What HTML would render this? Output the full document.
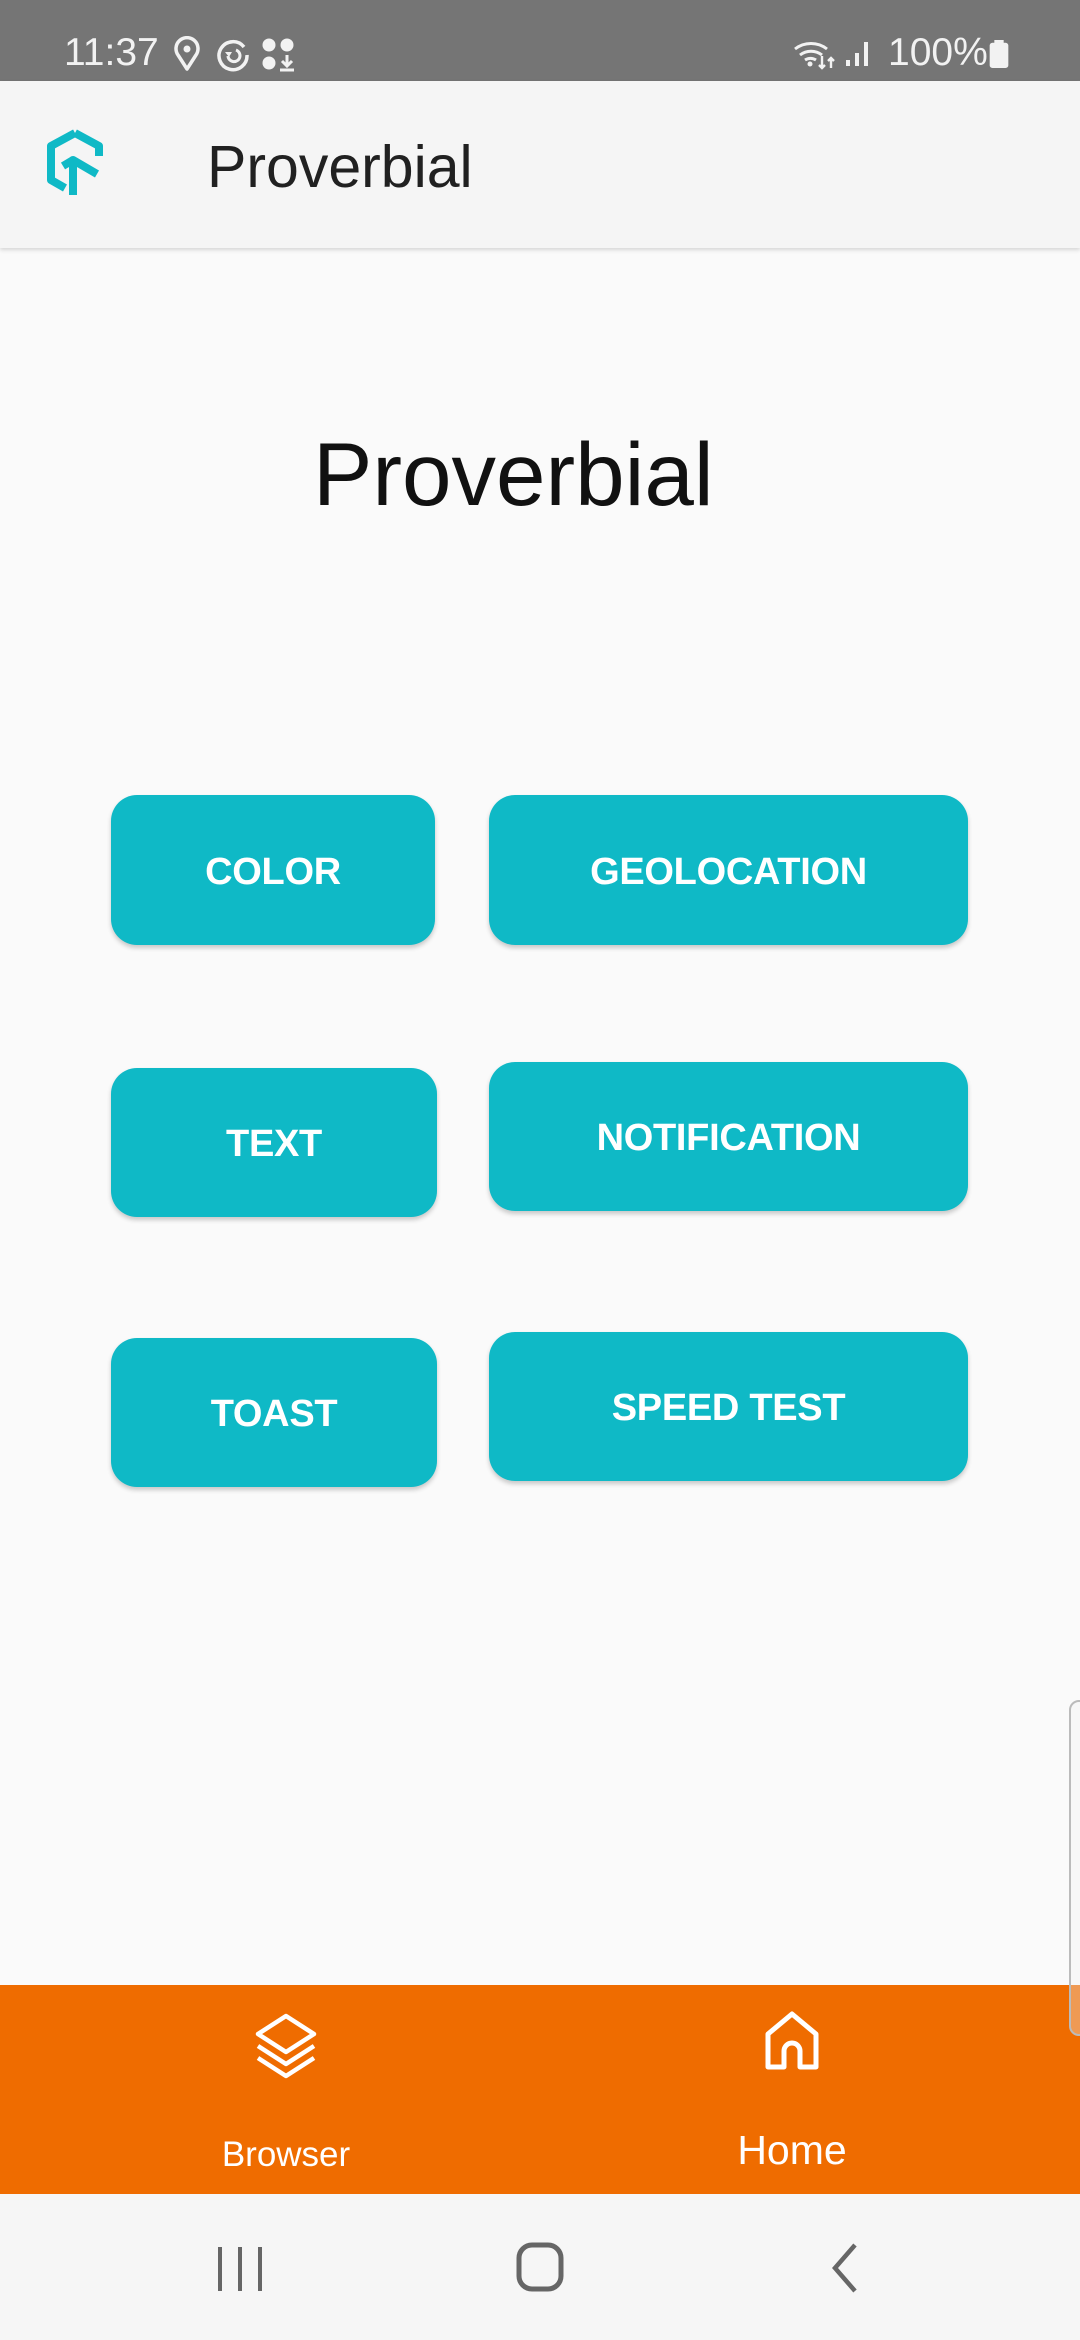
<!DOCTYPE html>
<html><head><meta charset="utf-8"><style>
*{margin:0;padding:0;box-sizing:border-box}
html,body{width:1080px;height:2340px;overflow:hidden;background:#fafafa;font-family:"Liberation Sans",sans-serif;position:relative}
.abs{position:absolute}
.status{left:0;top:0;width:1080px;height:81px;background:#757575;color:#f2f2f2}
.appbar{left:0;top:81px;width:1080px;height:167px;background:#f5f5f5;box-shadow:0 2px 4px rgba(0,0,0,.15)}
.btn{position:absolute;background:#0fb9c6;border-radius:26px;color:#fff;font-size:38px;font-weight:bold;display:flex;align-items:center;justify-content:center;box-shadow:0 3px 5px rgba(0,0,0,.2);letter-spacing:-0.3px;padding-top:4px}
.nav{left:0;top:1985px;width:1080px;height:209px;background:#ef6c00}
.sys{left:0;top:2194px;width:1080px;height:146px;background:#f6f6f6}
</style></head><body>
<div class="abs status">
  <div class="abs" style="left:64px;top:33px;font-size:39px;line-height:1">11:37</div>
  <svg class="abs" style="left:174px;top:36px" width="26" height="36" viewBox="0 0 26 36"><path d="M13 33 L4 19 A11 11 0 1 1 22 19 Z" fill="none" stroke="#f2f2f2" stroke-width="3.5" stroke-linejoin="round"/><circle cx="13" cy="13" r="3.5" fill="#f2f2f2"/></svg>
  <svg class="abs" style="left:216px;top:38px" width="34" height="34" viewBox="0 0 34 34"><path d="M28 9 A14 14 0 1 0 31 17" fill="none" stroke="#f2f2f2" stroke-width="3.5"/><path d="M20 12 A6 6 0 1 1 12 18" fill="none" stroke="#f2f2f2" stroke-width="3"/><path d="M9 14 L13 19 L16 14Z" fill="#f2f2f2"/></svg>
  <svg class="abs" style="left:262px;top:38px" width="34" height="34" viewBox="0 0 34 34"><circle cx="7" cy="7" r="6.5" fill="#f2f2f2"/><circle cx="25" cy="7" r="6.5" fill="#f2f2f2"/><circle cx="7" cy="25" r="6.5" fill="#f2f2f2"/><path d="M25 17v11M20 23l5 5 5-5M18 32h14" stroke="#f2f2f2" stroke-width="3" fill="none"/></svg>
  <svg class="abs" style="left:792px;top:38px" width="46" height="32" viewBox="0 0 46 32"><path d="M3 11 A26 26 0 0 1 35 11 M8 17 A18 18 0 0 1 30 17 M13 22 A10 10 0 0 1 24 22" fill="none" stroke="#f2f2f2" stroke-width="3"/><circle cx="18" cy="26" r="2.5" fill="#f2f2f2"/><path d="M30 18v12M27 27l3 3 3-3M39 30V20M36 23l3-3 3 3" stroke="#f2f2f2" stroke-width="2.4" fill="none"/></svg>
  <svg class="abs" style="left:845px;top:38px" width="30" height="30" viewBox="0 0 30 30"><rect x="1" y="22" width="4" height="6" fill="#f2f2f2"/><rect x="10" y="15" width="4" height="13" fill="#f2f2f2"/><rect x="19" y="4" width="4" height="24" fill="#f2f2f2"/></svg>
  <div class="abs" style="left:888px;top:33px;font-size:39px;line-height:1">100%</div>
  <svg class="abs" style="left:988px;top:40px" width="22" height="28" viewBox="0 0 22 30"><rect x="6" y="0" width="10" height="4" fill="#f2f2f2"/><rect x="1" y="3" width="20" height="27" rx="3" fill="#f2f2f2"/></svg>
</div>
<div class="abs appbar">
  <svg class="abs" style="left:44px;top:48px" width="66" height="70" viewBox="0 0 64 70"><path d="M30 4 L6 17 V51 L20 59" fill="none" stroke="#0fb9c6" stroke-width="8" stroke-linejoin="round"/><path d="M30 4 L54 17 V27" fill="none" stroke="#0fb9c6" stroke-width="8" stroke-linejoin="round"/><path d="M28 66 V31 L52 45" fill="none" stroke="#0fb9c6" stroke-width="8" stroke-linejoin="round"/><path d="M18 37 L28 31" stroke="#0fb9c6" stroke-width="8"/></svg>
  <div class="abs" style="left:207px;top:57px;font-size:59px;color:#212121;line-height:1">Proverbial</div>
</div>
<div class="abs" style="left:313px;top:430px;font-size:89px;color:#111;line-height:1">Proverbial</div>
<div class="btn" style="left:111px;top:795px;width:324px;height:150px">COLOR</div>
<div class="btn" style="left:489px;top:795px;width:479px;height:150px">GEOLOCATION</div>
<div class="btn" style="left:111px;top:1068px;width:326px;height:149px">TEXT</div>
<div class="btn" style="left:489px;top:1062px;width:479px;height:149px">NOTIFICATION</div>
<div class="btn" style="left:111px;top:1338px;width:326px;height:149px">TOAST</div>
<div class="btn" style="left:489px;top:1332px;width:479px;height:149px">SPEED TEST</div>
<div class="abs nav">
  <svg class="abs" style="left:254px;top:27px" width="64" height="70" viewBox="0 0 64 70"><path d="M32 4 L60 22 L32 40 L4 22 Z" fill="none" stroke="#fff" stroke-width="4.5" stroke-linejoin="round"/><path d="M4 34 L32 52 L60 34 M4 46 L32 64 L60 46" fill="none" stroke="#fff" stroke-width="4.5" stroke-linejoin="round"/></svg>
  <svg class="abs" style="left:763px;top:25px" width="58" height="62" viewBox="0 0 58 62"><path d="M5 57 V24 L29 4 L53 24 V57 H37 V41 A8 8 0 0 0 21 41 V57 Z" fill="none" stroke="#fff" stroke-width="5" stroke-linejoin="round"/></svg>
  <div class="abs" style="left:186px;top:152px;width:200px;text-align:center;font-size:35px;color:#fff;line-height:1">Browser</div>
  <div class="abs" style="left:692px;top:145px;width:200px;text-align:center;font-size:41px;color:#fff;line-height:1">Home</div>
</div>
<div class="abs" style="left:1069px;top:1700px;width:20px;height:336px;border:2px solid #bbb;border-radius:10px;background:rgba(240,240,240,.35);z-index:5"></div>
<div class="abs sys">
  <svg class="abs" style="left:215px;top:50px" width="50" height="50" viewBox="0 0 50 50"><path d="M5 3v44M25 3v44M45 3v44" stroke="#666" stroke-width="4"/></svg>
  <svg class="abs" style="left:515px;top:47px" width="50" height="52" viewBox="0 0 50 52"><rect x="4" y="4" width="42" height="44" rx="13" fill="none" stroke="#666" stroke-width="5"/></svg>
  <svg class="abs" style="left:825px;top:48px" width="40" height="52" viewBox="0 0 40 52"><path d="M30 3 L10 26 L30 49" fill="none" stroke="#666" stroke-width="4.5"/></svg>
</div>
</body></html>
